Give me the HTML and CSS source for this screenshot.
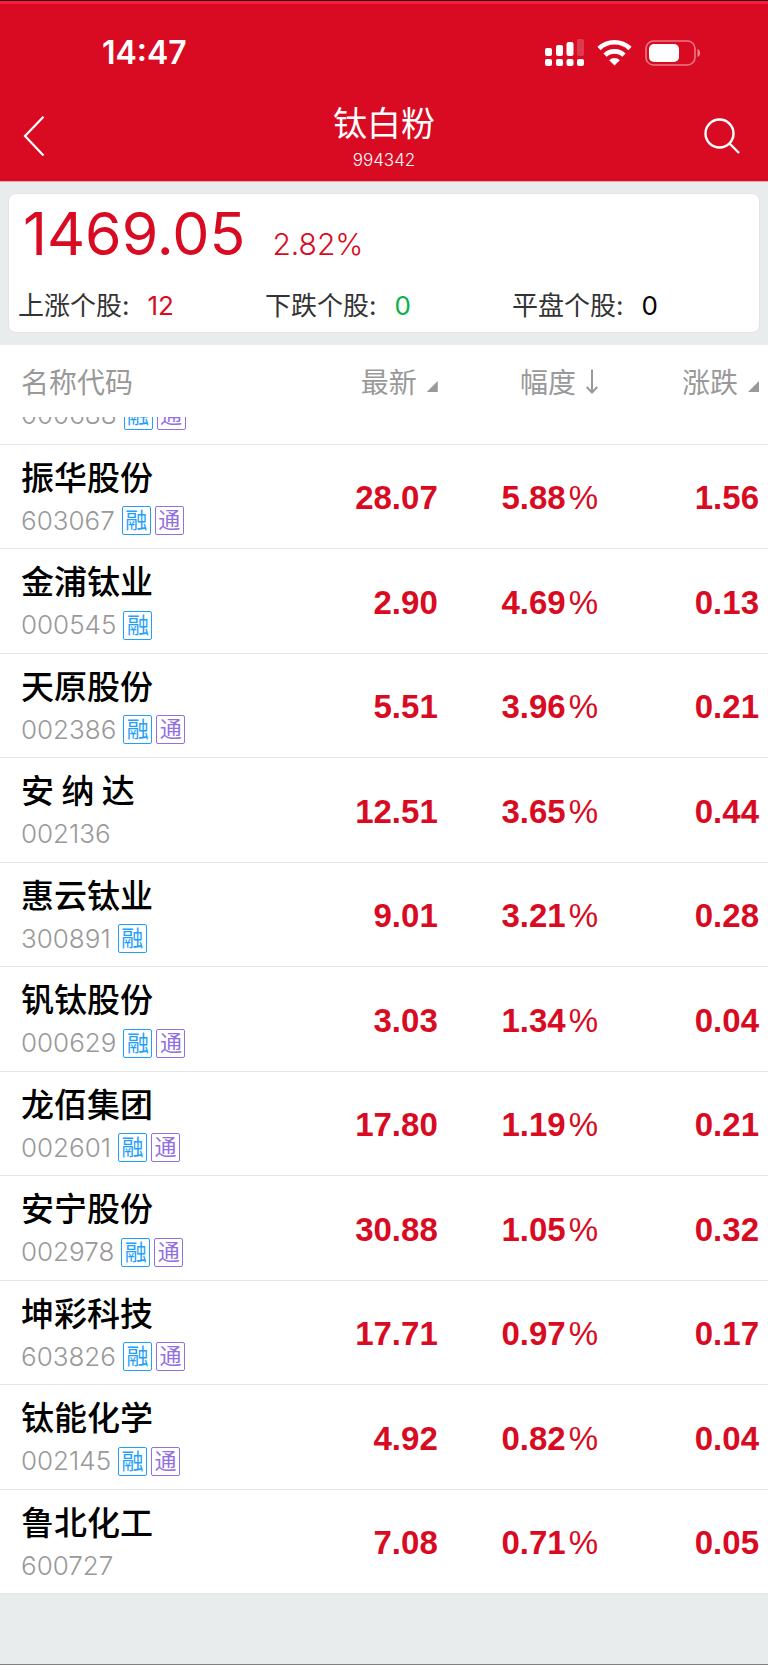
FILE: index.html
```
<!DOCTYPE html>
<html lang="zh-CN">
<head>
    <meta charset="utf-8">
    <meta name="viewport" content="width=device-width, initial-scale=1">
    <title>钛白粉 994342</title>
    <link rel="stylesheet" href="styles.css">
</head>
<body>
    <header class="header">
        <div class="status-bar">
            <span class="time">14:47</span>
            <div class="status-icons">
                <svg width="39" height="28" viewBox="0 0 39 28" fill="#fff">
                    <rect x="0" y="9" width="7" height="8" rx="2"/>
                    <rect x="11" y="6" width="7" height="11" rx="2"/>
                    <rect x="21.500" y="3" width="7" height="14" rx="2"/>
                    <rect x="32" y="0" width="7" height="17" rx="2" opacity="0.2"/>
                    <rect x="0" y="20" width="7" height="7" rx="2"/>
                    <rect x="11" y="20" width="7" height="7" rx="2"/>
                    <rect x="21.500" y="20" width="7" height="7" rx="2"/>
                    <rect x="32" y="20" width="7" height="7" rx="2"/>
                </svg>
                <svg width="35" height="26" viewBox="0 0 35 26" fill="none" stroke="#fff" stroke-width="4.600">
                    <path d="M2 8.500a22.500 22.500 0 0 1 31 0"/>
                    <path d="M8 15.200a13.800 13.800 0 0 1 19 0"/>
                    <path d="M17.500 25.500l-5.300-5.300a7.600 7.600 0 0 1 10.600 0z" fill="#fff" stroke="none"/>
                </svg>
                <svg width="56" height="26" viewBox="0 0 56 26">
                    <rect x="1" y="1" width="49" height="24" rx="7.500" fill="none" stroke="#fff" stroke-width="1.600" opacity="0.45"/>
                    <rect x="4" y="4" width="30" height="18" rx="5" fill="#fff"/>
                    <path d="M52.500 9c3.500 1.200 3.500 7 0 8z" fill="#fff" opacity="0.5"/>
                </svg>
            </div>
        </div>
        <nav class="nav">
            <button class="icon-btn" aria-label="返回">
                <svg width="22" height="40" viewBox="0 0 22 40" fill="none" stroke="#fff" stroke-width="2.200">
                    <path d="M20.500 0.800L2 20l18.500 19.500"/>
                </svg>
            </button>
            <div class="nav-title">
                <h1>钛白粉</h1>
                <p>994342</p>
            </div>
            <button class="icon-btn" aria-label="搜索">
                <svg width="36" height="36" viewBox="0 0 36 36" fill="none" stroke="#fff" stroke-width="2.400">
                    <circle cx="15.500" cy="15.500" r="14"/>
                    <path d="M25.500 25.500L35 35"/>
                </svg>
            </button>
        </nav>
    </header>

    <section class="card">
        <div class="quote">
            <span class="price">1469.05</span>
            <span class="percent">2.82%</span>
        </div>
        <div class="counts">
            <div>上涨个股:<span class="count up">12</span></div>
            <div>下跌个股:<span class="count down">0</span></div>
            <div>平盘个股:<span class="count flat">0</span></div>
        </div>
    </section>

    <table class="stocks">
        <thead>
            <tr>
                <th class="col-name">名称代码</th>
                <th class="col-last"><button>最新<i class="sort"></i></button></th>
                <th class="col-pct"><button>幅度<svg width="12" height="25" viewBox="0 0 12 25" fill="none" stroke="#999" stroke-width="2"><path d="M6 0.500V23.500M0.700 18L6 23.500L11.300 18"/></svg></button></th>
                <th class="col-diff"><button>涨跌<i class="sort"></i></button></th>
            </tr>
        </thead>
        <tbody id="stocks-body">
            <!-- row scrolled under the header -->
            <tr class="cut">
                <td colspan="4"><div class="cut-box"><div class="code">000688<span class="tag rong">融</span><span class="tag tong">通</span></div></div></td>
            </tr>
        </tbody>
    </table>

    <script>
        const stocks = [
            ['振华股份', '603067', '融通', '28.07', '5.88', '1.56'],
            ['金浦钛业', '000545', '融', '2.90', '4.69', '0.13'],
            ['天原股份', '002386', '融通', '5.51', '3.96', '0.21'],
            ['安 纳 达', '002136', '', '12.51', '3.65', '0.44'],
            ['惠云钛业', '300891', '融', '9.01', '3.21', '0.28'],
            ['钒钛股份', '000629', '融通', '3.03', '1.34', '0.04'],
            ['龙佰集团', '002601', '融通', '17.80', '1.19', '0.21'],
            ['安宁股份', '002978', '融通', '30.88', '1.05', '0.32'],
            ['坤彩科技', '603826', '融通', '17.71', '0.97', '0.17'],
            ['钛能化学', '002145', '融通', '4.92', '0.82', '0.04'],
            ['鲁北化工', '600727', '', '7.08', '0.71', '0.05']
        ];

        const tagClass = { '融': 'rong', '通': 'tong' };
        const tableBody = document.getElementById('stocks-body');

        stocks.forEach(stock => {
            const tags = [...stock[2]].map(t => `<span class="tag ${tagClass[t]}">${t}</span>`).join('');
            const row = document.createElement('tr');
            row.innerHTML = `
                <td class="col-name"><div class="name">${stock[0]}</div><div class="code">${stock[1]}${tags}</div></td>
                <td class="col-last">${stock[3]}</td>
                <td class="col-pct">${stock[4]}<span class="unit">%</span></td>
                <td class="col-diff">${stock[5]}</td>
            `;
            tableBody.appendChild(row);
        });
    </script>
</body>
</html>
```
FILE: styles.css
```
* {
    box-sizing: border-box;
}
body {
    margin: 0;
    min-height: 100vh;
    background-color: #e8ecec;
    border-bottom: 1px solid #7c8080;
    font-family: Inter, "Noto Sans CJK SC", sans-serif;
    color: #333;
}
button {
    padding: 0;
    border: none;
    background: none;
    font: inherit;
    color: inherit;
}
svg {
    display: block;
}

/* header */
.header {
    background-color: #d80b22;
    border-top: 1px solid #30040a;
    border-bottom: 1px solid #eaa5ae;
    box-shadow: inset 0 3px #fb1c3d;
    color: #fff;
}
.status-bar {
    display: flex;
    justify-content: space-between;
    align-items: center;
    height: 90px;
    padding: 13px 67px 0 102px;
}
.time {
    font-size: 32px;
    font-weight: 600;
}
.status-icons {
    display: flex;
    align-items: center;
    gap: 13px;
}
.nav {
    display: flex;
    justify-content: space-between;
    align-items: center;
    height: 90px;
    padding: 0 28px 0 23px;
}
.icon-btn {
    width: 36px;
}
.nav-title {
    padding: 4px 0 0 5px;
    text-align: center;
}
.nav-title h1 {
    margin: 0;
    font-size: 34px;
    font-weight: 400;
    line-height: 40px;
}
.nav-title p {
    margin: 4px 0 0;
    font-size: 17px;
    font-weight: 300;
    line-height: 24px;
}

/* index card */
.card {
    margin: 11px 8px 12px;
    padding: 7px 0 7px 9px;
    background-color: #fff;
    border: 1px solid #e4e4e4;
    border-radius: 8px;
}
.quote {
    display: flex;
    align-items: baseline;
    gap: 27px;
    padding-left: 5px;
    color: #d80b22;
}
.price {
    font-size: 59px;
    line-height: 66px;
}
.percent {
    font-size: 30px;
    font-weight: 300;
}
.counts {
    display: grid;
    grid-template-columns: repeat(3, 1fr);
    margin-top: 20px;
    font-size: 26px;
    line-height: 38px;
}
.count {
    margin-left: 18px;
}
.up {
    color: #d80b22;
}
.down {
    color: #09b04a;
}
.flat {
    color: #000;
}

/* stock list */
.stocks {
    width: 100%;
    table-layout: fixed;
    border-collapse: separate;
    border-spacing: 0;
    background-color: #fff;
}
th, td {
    padding: 0;
    text-align: right;
}
th {
    height: 72px;
    font-size: 28px;
    font-weight: 400;
    color: #999;
}
th button {
    display: inline-flex;
    align-items: center;
    gap: 10px;
}
td {
    height: 104px;
    padding-top: 3px;
    border-bottom: 1px solid #e6e8e8;
    font-family: "Liberation Sans", Arial, sans-serif;
    font-size: 33px;
    font-weight: 700;
    color: #d80b22;
}
tbody tr:nth-child(odd) td {
    height: 105px;
}
.col-name {
    width: 30%;
    padding: 0 0 0 21px;
    text-align: left;
}
.col-last {
    width: 27%;
}
.col-pct {
    width: 21%;
    padding-right: 1px;
}
.col-diff {
    width: 22%;
    padding-right: 9px;
}
.sort {
    width: 11px;
    height: 11px;
    margin-top: 11px;
    background-color: #999;
    clip-path: polygon(100% 0, 100% 100%, 0 100%);
}
.unit {
    margin-left: 3px;
    font-weight: 400;
}
.name {
    font-family: "Noto Sans CJK SC", sans-serif;
    font-size: 33px;
    font-weight: 500;
    line-height: 36px;
    color: #000;
}
.code {
    display: flex;
    align-items: center;
    gap: 4px;
    margin-top: 12px;
    font-family: Inter, "Noto Sans CJK SC", sans-serif;
    font-size: 26px;
    font-weight: 300;
    line-height: 30px;
    color: #999;
}
.tag {
    width: 29px;
    height: 29px;
    border: 1px solid;
    border-radius: 2px;
    font-size: 22px;
    font-weight: 400;
    line-height: 27px;
    text-align: center;
}
.rong {
    margin-left: 3px;
    color: #1fa0fb;
}
.tong {
    color: #9370e0;
}
tbody tr.cut:first-child td {
    height: 28px;
    padding: 0;
}
.cut-box {
    display: flex;
    align-items: flex-end;
    height: 27px;
    padding: 0 0 14px 21px;
    overflow: hidden;
}
```
